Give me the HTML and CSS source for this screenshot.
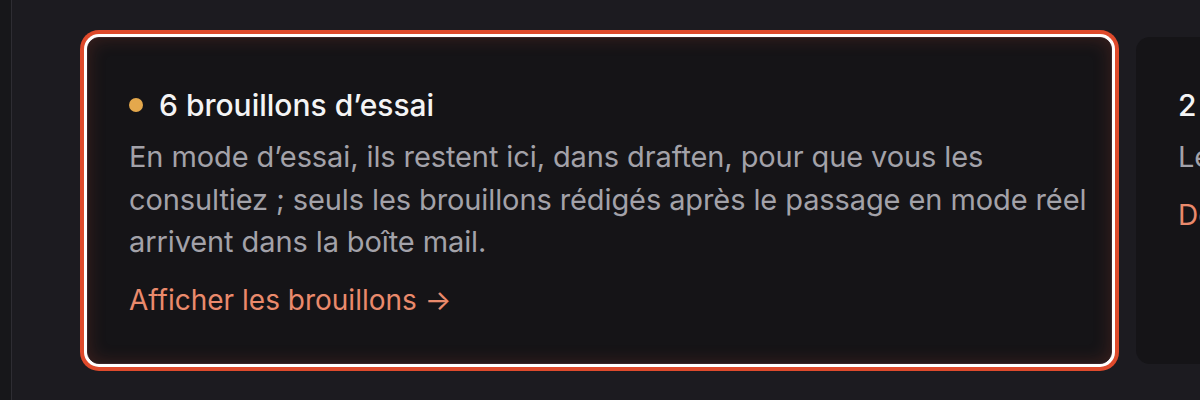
FILE: index.html
```html
<!DOCTYPE html>
<html lang="fr">
<head>
<meta charset="utf-8">
<title>Brouillons</title>
<link rel="stylesheet" href="styles.css">
</head>
<body>
<div class="app">
  <aside class="rail"></aside>
  <main class="main">
    <div class="cards">
      <section class="card card--focus">
        <h2 class="card-title"><span class="dot"></span>6 brouillons d’essai</h2>
        <p class="card-text">En mode d’essai, ils restent ici, dans draften, pour que vous les consultiez ; seuls les brouillons rédigés après le passage en mode réel arrivent dans la boîte mail.</p>
        <a class="card-link" href="#">Afficher les brouillons →</a>
      </section>
      <section class="card">
        <h2 class="card-title">2 envois programmés</h2>
        <p class="card-text">Les envois partent automatiquement.</p>
        <a class="card-link" href="#">Demander l’envoi →</a>
      </section>
    </div>
  </main>
</div>
</body>
</html>
```
FILE: styles.css
```css
html, body {
  margin: 0;
  height: 100%;
  background: #1c1b20;
  overflow: hidden;
}
body {
  font-family: Inter, "Noto Sans", sans-serif;
}
.app {
  display: flex;
  height: 400px;
}
.rail {
  width: 11px;
  flex-shrink: 0;
  background: #17171a;
  border-right: 1px solid #2e2d33;
}
.main {
  flex: 1;
  padding: 37px 0 0 75px;
  overflow: hidden;
}
.cards {
  display: flex;
  gap: 24px;
}
.card {
  flex-shrink: 0;
  width: 1025px;
  height: 327px;
  box-sizing: border-box;
  padding: 50px 42px 0 42px;
  background: #151417;
  border-radius: 14px;
}
.card--focus {
  border: 1px solid #3a2427;
  padding: 49px 41px 0 41px;
  border-radius: 12px;
  box-shadow:
    inset 0 0 18px rgba(190, 70, 50, 0.24),
    0 0 0 3px #ffffff,
    0 0 0 7px #de4a2c;
}
.card-title {
  display: flex;
  align-items: center;
  gap: 16px;
  margin: 0;
  font-size: 30px;
  line-height: 36px;
  font-weight: 500;
  color: #f4f4f5;
  white-space: nowrap;
}
.dot {
  width: 14px;
  height: 14px;
  flex-shrink: 0;
  border-radius: 50%;
  background: #e4a84c;
}
.card-text {
  margin: 13px 0 0;
  width: 975px;
  font-size: 29px;
  line-height: 42.5px;
  letter-spacing: -0.1px;
  color: #a3a2a9;
}
.card-link {
  display: inline-block;
  margin-top: 18px;
  font-size: 28px;
  line-height: 36px;
  color: #ea8a6c;
  text-decoration: none;
  white-space: nowrap;
}
```
